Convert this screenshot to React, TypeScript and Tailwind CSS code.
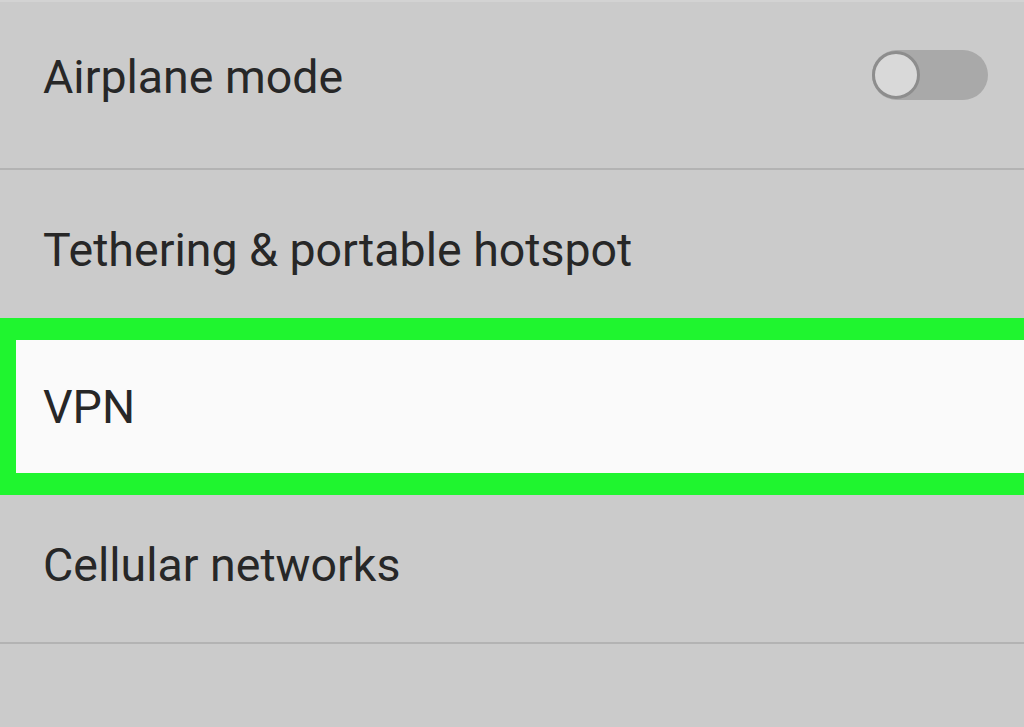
import { FC } from "react";

const Toggle: FC = () => (
    <div className="relative h-[50px] w-[116px] rounded-full bg-[#a9a9a9]">
        <div className="absolute left-0 top-[1px] h-[48px] w-[48px] rounded-full border-[3px] border-[#8d8d8d] bg-[#d9d9d9]" />
    </div>
);

export default function App() {
    return (
        <div
            className="flex h-[727px] w-[1024px] flex-col overflow-hidden bg-[#cbcbcb] text-[46.5px] leading-none text-[#272727]"
            style={{ fontFamily: "Roboto, 'Liberation Sans', sans-serif" }}
        >
            <div className="flex h-[170px] shrink-0 items-start justify-between border-t-2 border-b-2 border-t-[#d3d3d3] border-b-[#b3b3b3] pl-[43px] pr-[36px] pt-[52px]">
                <span>Airplane mode</span>
                <div className="-mt-[4px]">
                    <Toggle />
                </div>
            </div>
            <div className="h-[148px] shrink-0 pl-[43px] pt-[57px]">
                <span>Tethering &amp; portable hotspot</span>
            </div>
            <div className="h-[177px] shrink-0 border-y-[22px] border-l-[16px] border-[#1ff52f] bg-[#fafafa] pl-[27px] pt-[44px]">
                <span>VPN</span>
            </div>
            <div className="h-[149px] shrink-0 border-b-2 border-[#b3b3b3] pl-[43px] pt-[47px]">
                <span>Cellular networks</span>
            </div>
            <div className="flex-1" />
        </div>
    );
}
